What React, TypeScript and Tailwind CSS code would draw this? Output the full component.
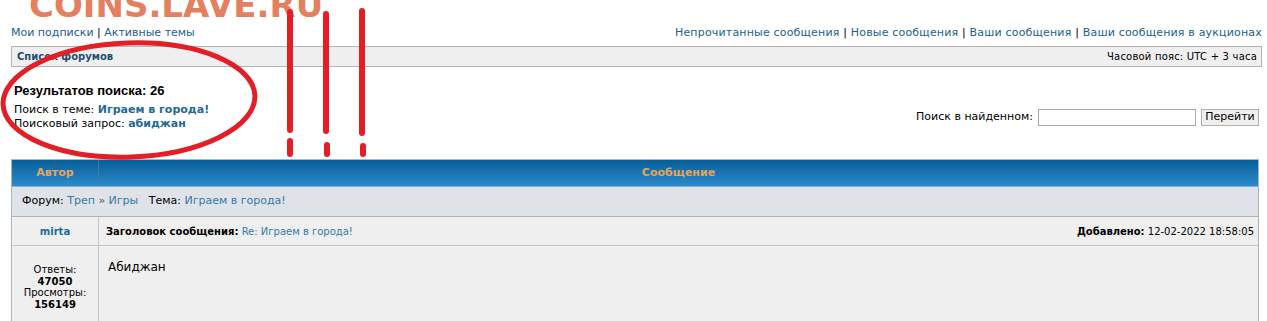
export default function App() {
  const link = "text-[#22608c]";
  const link2 = "text-[#3479a9]";
  return (
    <div className="relative h-[321px] overflow-hidden bg-white font-['DejaVu_Sans',sans-serif] text-[11px] text-black">
      {/* watermark */}
      <div className="pointer-events-none absolute left-[29px] top-[-12px] font-['DejaVu_Sans',sans-serif] text-[34px] font-bold leading-none text-[#e2724f] opacity-90">
        COINS.LAVE.RU
      </div>

      <div className="pl-[11px] pr-[5px] pt-[26px]">
        {/* top links */}
        <div className="flex h-[14px] items-center justify-between leading-[14px]">
          <div>
            <span className={link}>Мои подписки</span> | <span className={link}>Активные темы</span>
          </div>
          <div className="tracking-[0.18px]">
            <span className={link}>Непрочитанные сообщения</span> | <span className={link}>Новые сообщения</span> |{" "}
            <span className={link}>Ваши сообщения</span> | <span className={link}>Ваши сообщения в аукционах</span>
          </div>
        </div>

        {/* nav bar */}
        <div className="mt-[6px] flex h-[21px] items-center justify-between border border-[#b4b4b4] bg-[#efefef] pl-[5px] pr-[4px] text-[10px]">
          <span className="font-bold text-[#1d4f72]">Список форумов</span>
          <span className="tracking-[0.2px]">Часовой пояс: UTC + 3 часа</span>
        </div>

        {/* search info */}
        <div className="flex items-end justify-between">
          <div className="pl-[3px] pt-[16px]">
            <div className="font-['Liberation_Sans',sans-serif] text-[13px] font-bold leading-[16px]">Результатов поиска: 26</div>
            <div className="mt-[4px] leading-[14px]">
              Поиск в теме: <span className="font-bold text-[#226a96]">Играем в города!</span>
            </div>
            <div className="leading-[14px]">
              Поисковый запрос: <span className="font-bold text-[#226a96]">абиджан</span>
            </div>
          </div>
          <div className="mb-[5px] flex items-center gap-[5px] pr-[3px]">
            <span>Поиск в найденном:</span>
            <div className="h-[17px] w-[158px] border border-[#a9a9a9] bg-white" />
            <div className="flex h-[17px] w-[58px] items-center justify-center border border-[#b0b0b0] bg-[#efefef]">Перейти</div>
          </div>
        </div>

        {/* table */}
        <div className="mr-[3px] mt-[28px] border border-[#a9b4bd] bg-[#efefef]">
          <div className="flex h-[27px] border-b border-[#7fb6dc] bg-gradient-to-b from-[#055e98] to-[#2a8ccc] text-[11px] font-bold text-[#e6a45a]">
            <div className="flex w-[87px] items-center justify-center border-r border-[#3d7aa6]">Автор</div>
            <div className="flex flex-1 items-center justify-center">Сообщение</div>
          </div>
          <div className="flex h-[30px] items-center border-b border-[#aab4bc] bg-[#dfe3e7] pl-[10px]">
            Форум:&nbsp;<span className={link2}>Треп</span>&nbsp;<span className="text-[#555]">»</span>&nbsp;
            <span className={link2}>Игры</span>&nbsp;&nbsp;&nbsp;Тема:&nbsp;<span className={link2}>Играем в города!</span>
          </div>
          <div className="flex h-[29px] border-b border-[#c0c6cb] text-[10px]">
            <div className="flex w-[87px] items-center justify-center border-r border-[#c0c6cb] font-bold text-[#226a96]">
              mirta
            </div>
            <div className="flex flex-1 items-center justify-between pl-[7px] pr-[4px]">
              <span>
                <b>Заголовок сообщения:</b> <span className={link2}>Re: Играем в города!</span>
              </span>
              <span>
                <b>Добавлено:</b> 12-02-2022 18:58:05
              </span>
            </div>
          </div>
          <div className="flex h-[80px]">
            <div className="w-[87px] border-r border-[#c0c6cb] pt-[18px] text-center text-[10px] leading-[11.5px]">
              <div>Ответы:</div>
              <div className="font-bold">47050</div>
              <div>Просмотры:</div>
              <div className="font-bold">156149</div>
            </div>
            <div className="flex-1 pl-[9px] pt-[12px] text-[12px]">Абиджан</div>
          </div>
        </div>
      </div>

      {/* red marker overlay */}
      <svg className="pointer-events-none absolute left-0 top-0" width="1267" height="321" viewBox="0 0 1267 321">
        <ellipse cx="129" cy="100" rx="126" ry="57" fill="none" stroke="#e31e26" strokeWidth="5" transform="rotate(-2 129 100)" />
        <g stroke="#e31e26" strokeWidth="6" strokeLinecap="round">
          <line x1="290" y1="12" x2="290" y2="130" />
          <line x1="290" y1="141" x2="290" y2="154" />
          <line x1="326" y1="14" x2="326" y2="131" />
          <line x1="327" y1="145" x2="327" y2="154" />
          <line x1="362" y1="11" x2="362" y2="133" />
          <line x1="363" y1="146" x2="363" y2="154" />
        </g>
      </svg>
    </div>
  );
}
